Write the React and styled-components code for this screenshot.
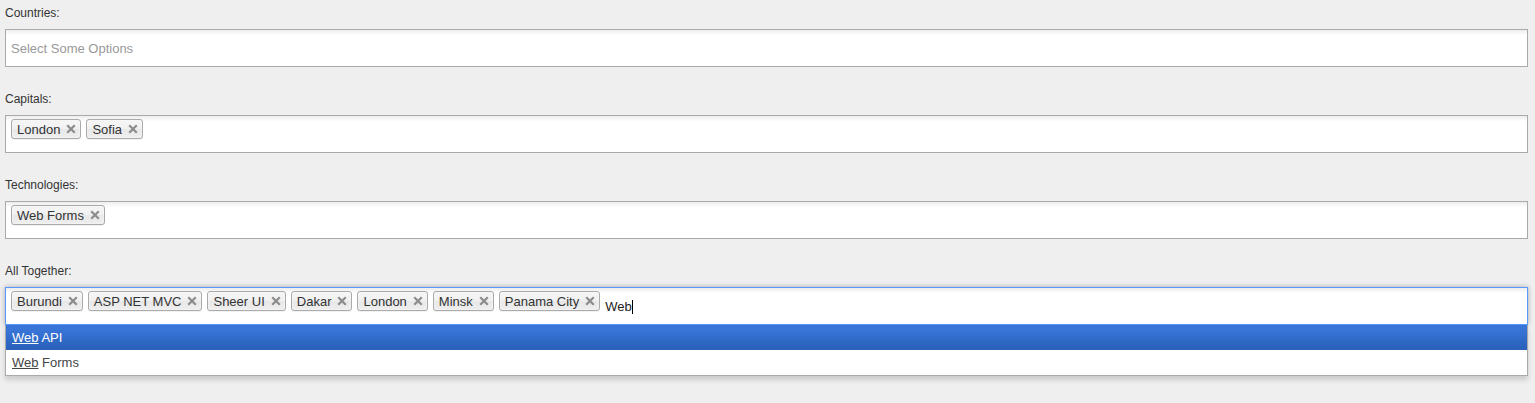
import styled, { createGlobalStyle, css } from "styled-components"

const GlobalStyle = createGlobalStyle`
  html, body {
    margin: 0;
    padding: 0;
    background: #efefef;
    font-family: "Liberation Sans", Arial, Helvetica, sans-serif;
    overflow: hidden;
  }
`

const fields = [
  { label: "Countries:", chips: [], placeholder: "Select Some Options" },
  { label: "Capitals:", chips: ["London", "Sofia"] },
  { label: "Technologies:", chips: ["Web Forms"] },
  {
    label: "All Together:",
    chips: ["Burundi", "ASP NET MVC", "Sheer UI", "Dakar", "London", "Minsk", "Panama City"],
    active: true,
    typed: "Web",
    results: [
      { match: "Web", rest: " API", highlighted: true },
      { match: "Web", rest: " Forms" },
    ],
  },
  { label: "Information:", chips: [] },
]

function CloseIcon() {
  return (
    <Close>
      <svg width="12" height="12" viewBox="0 0 12 12">
        <path d="M3 3 L9 9 M9 3 L3 9" stroke="#8c8c8c" strokeWidth="2.2" strokeLinecap="square" />
      </svg>
    </Close>
  )
}

export default function App() {
  return (
    <>
      <GlobalStyle />
      <Page>
        {fields.map((f) => (
          <Field key={f.label}>
            <Label>{f.label}</Label>
            <Container>
              <Choices $active={f.active}>
                {f.chips.map((c) => (
                  <Chip key={c}>
                    {c}
                    <CloseIcon />
                  </Chip>
                ))}
                {f.placeholder && <Placeholder>{f.placeholder}</Placeholder>}
                {f.typed && (
                  <Typed>
                    {f.typed}
                    <Caret />
                  </Typed>
                )}
              </Choices>
              {f.results && (
                <Drop>
                  {f.results.map((r, i) => (
                    <Result key={i} $highlighted={r.highlighted}>
                      <em>{r.match}</em>
                      {r.rest}
                    </Result>
                  ))}
                </Drop>
              )}
            </Container>
          </Field>
        ))}
      </Page>
    </>
  )
}

const Page = styled.div`
  padding: 0 7px 0 5px;
`

const Field = styled.div`
  padding: 5px 0 19px;
`

const Label = styled.label`
  display: block;
  font-size: 12px;
  line-height: 16px;
  color: #333;
  margin-bottom: 8px;
`

const Container = styled.div`
  position: relative;
  font-size: 13px;
`

const Choices = styled.div`
  display: flex;
  flex-wrap: wrap;
  align-items: flex-start;
  box-sizing: border-box;
  height: 38px;
  padding: 0 5px;
  border: 1px solid #aaa;
  background-color: #fff;
  background-image: linear-gradient(#eee 1%, #fff 15%);
  cursor: text;

  ${(p) =>
    p.$active &&
    css`
      border-color: #5897fb;
      box-shadow: 0 0 5px rgba(0, 0, 0, 0.3);
    `}
`

const Chip = styled.div`
  position: relative;
  margin: 3px 5px 3px 0;
  padding: 3px 20px 2px 5px;
  border: 1px solid #aaa;
  border-radius: 3px;
  background-color: #eee;
  background-image: linear-gradient(#f4f4f4 20%, #f0f0f0 50%, #e8e8e8 52%, #eee 100%);
  box-shadow: 0 0 2px #fff inset, 0 1px 0 rgba(0, 0, 0, 0.05);
  color: #333;
  line-height: 13px;
  white-space: nowrap;
`

const Close = styled.span`
  position: absolute;
  top: 3px;
  right: 3px;
  width: 12px;
  height: 12px;
  display: block;

  svg {
    display: block;
  }
`

const Placeholder = styled.span`
  color: #999;
  line-height: 37px;
`

const Typed = styled.span`
  display: inline-flex;
  align-items: center;
  margin-top: 11px;
  color: #222;
  line-height: 15px;
`

const Caret = styled.span`
  display: inline-block;
  width: 1px;
  height: 14px;
  background: #000;
`

const Drop = styled.ul`
  list-style: none;
  margin: 0;
  padding: 0;
  background: #fff;
  border: 1px solid #aaa;
  border-top: 0;
  box-shadow: 0 4px 5px rgba(0, 0, 0, 0.15);
`

const Result = styled.li`
  padding: 5px 6px;
  line-height: 15px;
  color: #444;

  em {
    font-style: normal;
    text-decoration: underline;
  }

  ${(p) =>
    p.$highlighted &&
    css`
      background-color: #3875d7;
      background-image: linear-gradient(#3875d7 20%, #2a62bc 90%);
      color: #fff;
    `}
`
